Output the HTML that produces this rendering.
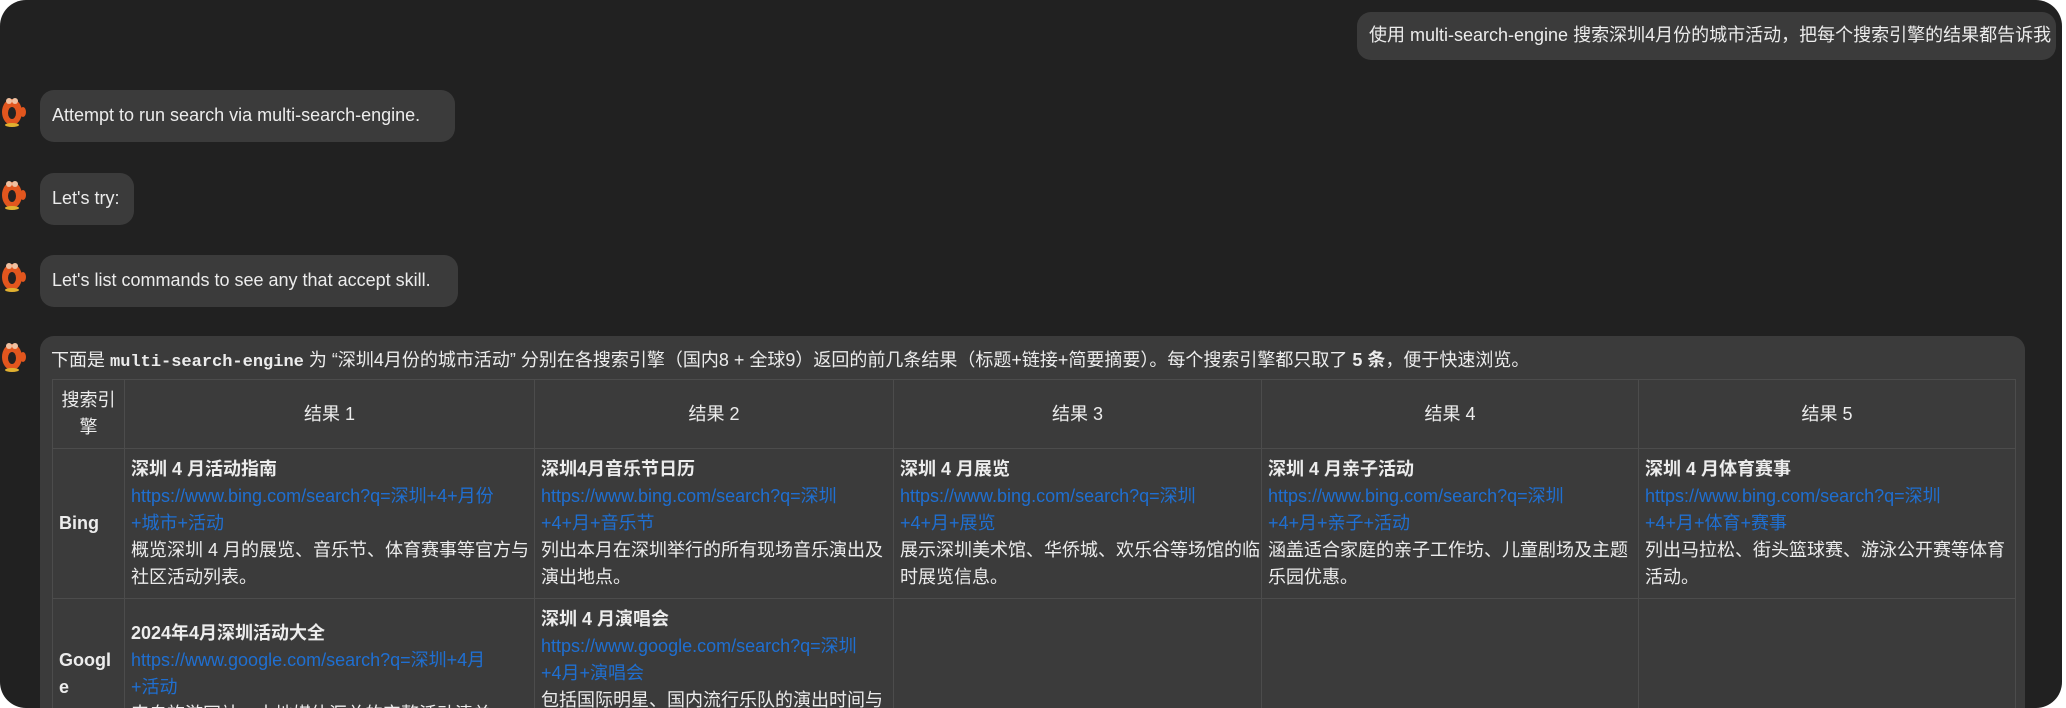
<!DOCTYPE html>
<html><head><meta charset="utf-8"><style>
*{margin:0;padding:0;box-sizing:border-box}
html,body{width:2066px;height:708px;overflow:hidden;background:#fff}
body{font-family:"Liberation Sans","Noto Sans CJK SC",sans-serif;font-size:18px;color:#ececec}
.panel{position:absolute;left:0;top:0;width:2062px;height:708px;background:#212121;border-radius:26px;overflow:hidden}
.b{position:absolute;background:#3b3b3b;border-radius:14px;line-height:27px;padding:12px 12px;white-space:nowrap}
.av{position:absolute;left:0;width:27px;height:36px}
.big{position:absolute;left:40px;top:336px;width:1985px;height:372px;overflow:hidden;background:#3b3b3b;border-radius:14px 14px 0 0;padding:11px 11px 0 11px}
.intro{line-height:27px;white-space:nowrap;padding-left:0}
code{font-family:"Liberation Mono","Noto Sans CJK SC",monospace;font-weight:bold;font-size:17px}
table{border-collapse:collapse;margin-top:3px;margin-left:1px;table-layout:fixed;width:1963px}
td,th{border:1px solid #4c4c4c;padding:7px 6px;line-height:27px;vertical-align:middle;white-space:nowrap;font-weight:normal;text-align:left}
th{text-align:center}
td.e{font-weight:bold;white-space:normal;word-break:break-all}
th.e{white-space:normal}
.t{font-weight:bold}
a{color:#1f6fd1;text-decoration:none}
</style></head><body>
<div class="panel">
<div class="b" style="left:1357px;top:12px;width:699px;height:48px;padding:10px 12px">使用 multi-search-engine 搜索深圳4月份的城市活动，把每个搜索引擎的结果都告诉我</div>

<svg class="av" style="top:92px" viewBox="0 0 27 36"><ellipse cx="12" cy="20" rx="10" ry="13" fill="#e2561e"/><ellipse cx="12" cy="21" rx="4" ry="6" fill="#222"/><circle cx="9" cy="9" r="3" fill="#f0c0a0"/><circle cx="15" cy="9" r="3" fill="#f0c0a0"/><ellipse cx="12" cy="33" rx="7" ry="2" fill="#e0b030"/><ellipse cx="23" cy="20" rx="3" ry="5" fill="#e2561e"/></svg>
<div class="b" style="left:40px;top:90px;width:415px;height:52px">Attempt to run search via multi-search-engine.</div>

<svg class="av" style="top:175px" viewBox="0 0 27 36"><ellipse cx="12" cy="20" rx="10" ry="13" fill="#e2561e"/><ellipse cx="12" cy="21" rx="4" ry="6" fill="#222"/><circle cx="9" cy="9" r="3" fill="#f0c0a0"/><circle cx="15" cy="9" r="3" fill="#f0c0a0"/><ellipse cx="12" cy="33" rx="7" ry="2" fill="#e0b030"/><ellipse cx="23" cy="20" rx="3" ry="5" fill="#e2561e"/></svg>
<div class="b" style="left:40px;top:173px;width:94px;height:52px">Let's try:</div>

<svg class="av" style="top:257px" viewBox="0 0 27 36"><ellipse cx="12" cy="20" rx="10" ry="13" fill="#e2561e"/><ellipse cx="12" cy="21" rx="4" ry="6" fill="#222"/><circle cx="9" cy="9" r="3" fill="#f0c0a0"/><circle cx="15" cy="9" r="3" fill="#f0c0a0"/><ellipse cx="12" cy="33" rx="7" ry="2" fill="#e0b030"/><ellipse cx="23" cy="20" rx="3" ry="5" fill="#e2561e"/></svg>
<div class="b" style="left:40px;top:255px;width:418px;height:52px">Let's list commands to see any that accept skill.</div>

<svg class="av" style="top:337px" viewBox="0 0 27 36"><ellipse cx="12" cy="20" rx="10" ry="13" fill="#e2561e"/><ellipse cx="12" cy="21" rx="4" ry="6" fill="#222"/><circle cx="9" cy="9" r="3" fill="#f0c0a0"/><circle cx="15" cy="9" r="3" fill="#f0c0a0"/><ellipse cx="12" cy="33" rx="7" ry="2" fill="#e0b030"/><ellipse cx="23" cy="20" rx="3" ry="5" fill="#e2561e"/></svg>
<div class="big">
<div class="intro">下面是 <code>multi-search-engine</code> 为 “深圳4月份的城市活动” 分别在各搜索引擎（国内8 + 全球9）返回的前几条结果（标题+链接+简要摘要）。每个搜索引擎都只取了 <b>5 条</b>，便于快速浏览。</div>
<table>
<colgroup><col style="width:72px"><col style="width:410px"><col style="width:359px"><col style="width:368px"><col style="width:377px"><col style="width:377px"></colgroup>
<tr><th class="e">搜索引擎</th><th>结果 1</th><th>结果 2</th><th>结果 3</th><th>结果 4</th><th>结果 5</th></tr>
<tr><td class="e">Bing</td>
<td><span class="t">深圳 4 月活动指南</span><br><a>https://www.bing.com/search?q=深圳+4+月份<br>+城市+活动</a><br>概览深圳 4 月的展览、音乐节、体育赛事等官方与<br>社区活动列表。</td>
<td><span class="t">深圳4月音乐节日历</span><br><a>https://www.bing.com/search?q=深圳<br>+4+月+音乐节</a><br>列出本月在深圳举行的所有现场音乐演出及<br>演出地点。</td>
<td><span class="t">深圳 4 月展览</span><br><a>https://www.bing.com/search?q=深圳<br>+4+月+展览</a><br>展示深圳美术馆、华侨城、欢乐谷等场馆的临<br>时展览信息。</td>
<td><span class="t">深圳 4 月亲子活动</span><br><a>https://www.bing.com/search?q=深圳<br>+4+月+亲子+活动</a><br>涵盖适合家庭的亲子工作坊、儿童剧场及主题<br>乐园优惠。</td>
<td><span class="t">深圳 4 月体育赛事</span><br><a>https://www.bing.com/search?q=深圳<br>+4+月+体育+赛事</a><br>列出马拉松、街头篮球赛、游泳公开赛等体育<br>活动。</td></tr>
<tr><td class="e">Google</td>
<td><span class="t">2024年4月深圳活动大全</span><br><a>https://www.google.com/search?q=深圳+4月<br>+活动</a><br>来自旅游网站、本地媒体汇总的完整活动清单。</td>
<td><span class="t">深圳 4 月演唱会</span><br><a>https://www.google.com/search?q=深圳<br>+4月+演唱会</a><br>包括国际明星、国内流行乐队的演出时间与<br>票务信息。</td>
<td></td><td></td><td></td></tr>
</table>
</div>
</div>
</body></html>
